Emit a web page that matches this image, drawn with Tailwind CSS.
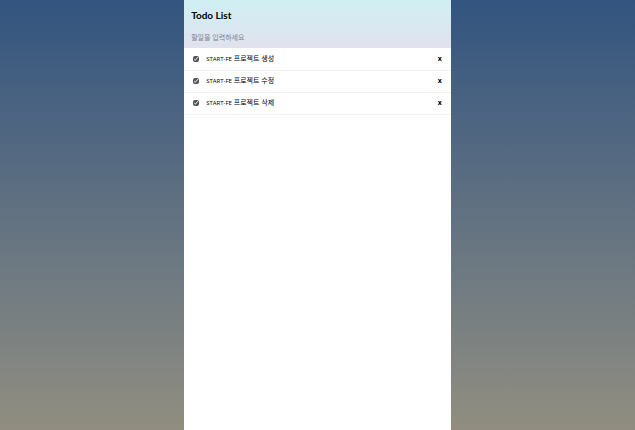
<!DOCTYPE html>
<html lang="ko">
<head>
<meta charset="utf-8">
<meta name="viewport" content="width=device-width, initial-scale=1">
<title>Todo List</title>
<script src="https://cdn.jsdelivr.net/npm/@tailwindcss/browser@4"></script>
</head>
<body class="flex min-h-screen justify-center bg-linear-to-b from-[#32547f] to-[#918e80] font-['Open_Sans','Noto_Sans_CJK_KR',sans-serif] text-black">
<main class="w-[42%] bg-white">
  <header class="flex h-12 flex-col bg-linear-to-b from-[#cfeff3] to-[#e1e2ee] px-[7px] pt-[7px]">
    <h1 class="font-['Lato',sans-serif] text-[10px] leading-4 font-bold">Todo List</h1>
    <input type="text" aria-label="할일 입력" placeholder="할일을 입력하세요" class="mt-1.5 h-4 w-full bg-transparent text-[7px] outline-none placeholder:text-[#7d828c]">
  </header>
  <ul class="pt-px text-[7px] leading-3">
    <li class="flex h-[22px] items-center border-b border-[#f3f3f3] px-[9px] pb-0.5">
      <input id="todo-1" type="checkbox" checked class="size-[6px] shrink-0 accent-[#555]">
      <label for="todo-1" class="flex-1 pl-[7px]"><span class="text-[6px]">START-FE</span> 프로젝트 생성</label>
      <button type="button" aria-label="삭제" class="leading-3 font-bold">x</button>
    </li>
    <li class="flex h-[22px] items-center border-b border-[#f3f3f3] px-[9px] pb-0.5">
      <input id="todo-2" type="checkbox" checked class="size-[6px] shrink-0 accent-[#555]">
      <label for="todo-2" class="flex-1 pl-[7px]"><span class="text-[6px]">START-FE</span> 프로젝트 수정</label>
      <button type="button" aria-label="삭제" class="leading-3 font-bold">x</button>
    </li>
    <li class="flex h-[22px] items-center border-b border-[#f3f3f3] px-[9px] pb-0.5">
      <input id="todo-3" type="checkbox" checked class="size-[6px] shrink-0 accent-[#555]">
      <label for="todo-3" class="flex-1 pl-[7px]"><span class="text-[6px]">START-FE</span> 프로젝트 삭제</label>
      <button type="button" aria-label="삭제" class="leading-3 font-bold">x</button>
    </li>
  </ul>
</main>
</body>
</html>
